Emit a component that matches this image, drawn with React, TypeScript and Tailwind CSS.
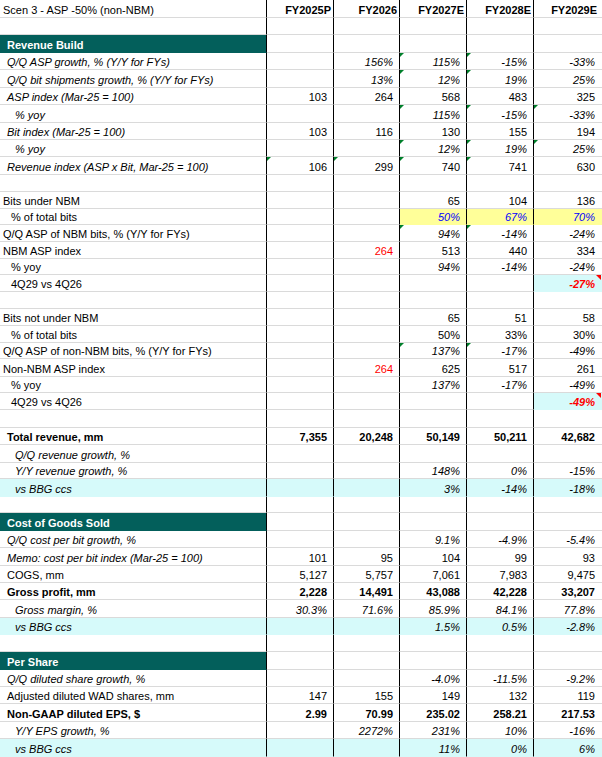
import React from "react";

type Cell = {
  v: string;
  i?: boolean;
  b?: boolean;
  c?: "red" | "blue";
  bg?: "yellow" | "cyan";
  t?: "g" | "r";
} | null;

type Row = {
  h: number;
  label?: string;
  pl?: number;
  li?: boolean;
  lb?: boolean;
  head?: boolean;
  teal?: boolean;
  cyan?: boolean;
  cells?: Cell[];
};

const HCLS: Record<number, string> = {
  16: "h-[16px]",
  17: "h-[17px]",
  18: "h-[18px]",
};

const PLCLS: Record<number, string> = {
  3: "pl-[3px]",
  7: "pl-[7px]",
  11: "pl-[11px]",
  15: "pl-[15px]",
};

const e: Cell = null;
const n = (v: string, extra: Partial<NonNullable<Cell>> = {}): Cell => ({ v, ...extra });
const it = (v: string, extra: Partial<NonNullable<Cell>> = {}): Cell => ({ v, i: true, ...extra });
const bd = (v: string): Cell => ({ v, b: true });

const rows: Row[] = [
  { h: 18, label: "Scen 3 - ASP -50% (non-NBM)", pl: 3, head: true },
  { h: 17 },
  { h: 18, label: "Revenue Build", teal: true },
  { h: 17, label: "Q/Q ASP growth, % (Y/Y for FYs)", pl: 7, li: true, cells: [e, it("156%"), it("115%", { t: "g" }), it("-15%", { t: "g" }), it("-33%")] },
  { h: 18, label: "Q/Q bit shipments growth, % (Y/Y for FYs)", pl: 7, li: true, cells: [e, it("13%"), it("12%", { t: "g" }), it("19%", { t: "g" }), it("25%")] },
  { h: 17, label: "ASP index (Mar-25 = 100)", pl: 7, li: true, cells: [n("103"), n("264"), n("568"), n("483"), n("325")] },
  { h: 18, label: "% yoy", pl: 15, li: true, cells: [e, e, it("115%", { t: "g" }), it("-15%", { t: "g" }), it("-33%", { t: "g" })] },
  { h: 17, label: "Bit index (Mar-25 = 100)", pl: 7, li: true, cells: [n("103"), n("116"), n("130"), n("155"), n("194")] },
  { h: 17, label: "% yoy", pl: 15, li: true, cells: [e, e, it("12%", { t: "g" }), it("19%", { t: "g" }), it("25%", { t: "g" })] },
  { h: 18, label: "Revenue index (ASP x Bit, Mar-25 = 100)", pl: 7, li: true, cells: [n("106", { t: "g" }), n("299", { t: "g" }), n("740", { t: "g" }), n("741", { t: "g" }), n("630")] },
  { h: 17 },
  { h: 17, label: "Bits under NBM", pl: 3, cells: [e, e, n("65"), n("104"), n("136")] },
  { h: 16, label: "% of total bits", pl: 11, cells: [e, e, it("50%", { c: "blue", bg: "yellow" }), it("67%", { c: "blue", bg: "yellow" }), it("70%", { c: "blue", bg: "yellow" })] },
  { h: 17, label: "Q/Q ASP of NBM bits, % (Y/Y for FYs)", pl: 3, cells: [e, e, it("94%", { t: "g" }), it("-14%", { t: "g" }), it("-24%")] },
  { h: 17, label: "NBM ASP index", pl: 3, cells: [e, n("264", { c: "red" }), n("513"), n("440"), n("334")] },
  { h: 16, label: "% yoy", pl: 11, cells: [e, e, it("94%"), it("-14%"), it("-24%")] },
  { h: 17, label: "4Q29 vs 4Q26", pl: 11, cells: [e, e, e, e, it("-27%", { b: true, c: "red", bg: "cyan", t: "r" })] },
  { h: 17 },
  { h: 17, label: "Bits not under NBM", pl: 3, cells: [e, e, n("65"), n("51"), n("58")] },
  { h: 17, label: "% of total bits", pl: 11, cells: [e, e, n("50%"), n("33%"), n("30%")] },
  { h: 16, label: "Q/Q ASP of non-NBM bits, % (Y/Y for FYs)", pl: 3, cells: [e, e, it("137%", { t: "g" }), it("-17%", { t: "g" }), it("-49%")] },
  { h: 18, label: "Non-NBM ASP index", pl: 3, cells: [e, n("264", { c: "red" }), n("625"), n("517"), n("261")] },
  { h: 16, label: "% yoy", pl: 11, cells: [e, e, it("137%"), it("-17%"), it("-49%")] },
  { h: 17, label: "4Q29 vs 4Q26", pl: 11, cells: [e, e, e, e, it("-49%", { b: true, c: "red", bg: "cyan", t: "r" })] },
  { h: 18 },
  { h: 17, label: "Total revenue, mm", pl: 7, lb: true, cells: [bd("7,355"), bd("20,248"), bd("50,149"), bd("50,211"), bd("42,682")] },
  { h: 18, label: "Q/Q revenue growth, %", pl: 15, li: true, cells: [e, e, e, e, e] },
  { h: 16, label: "Y/Y revenue growth, %", pl: 15, li: true, cells: [e, e, it("148%"), it("0%"), it("-15%")] },
  { h: 18, label: "vs BBG ccs", pl: 15, li: true, cyan: true, cells: [e, e, it("3%"), it("-14%"), it("-18%")] },
  { h: 16 },
  { h: 18, label: "Cost of Goods Sold", teal: true },
  { h: 17, label: "Q/Q cost per bit growth, %", pl: 7, li: true, cells: [e, e, it("9.1%"), it("-4.9%"), it("-5.4%")] },
  { h: 18, label: "Memo: cost per bit index (Mar-25 = 100)", pl: 7, li: true, cells: [n("101"), n("95"), n("104"), n("99"), n("93")] },
  { h: 17, label: "COGS, mm", pl: 7, cells: [n("5,127"), n("5,757"), n("7,061"), n("7,983"), n("9,475")] },
  { h: 17, label: "Gross profit, mm", pl: 7, lb: true, cells: [bd("2,228"), bd("14,491"), bd("43,088"), bd("42,228"), bd("33,207")] },
  { h: 18, label: "Gross margin, %", pl: 15, li: true, cells: [it("30.3%"), it("71.6%"), it("85.9%"), it("84.1%"), it("77.8%")] },
  { h: 17, label: "vs BBG ccs", pl: 15, li: true, cyan: true, cells: [e, e, it("1.5%"), it("0.5%"), it("-2.8%")] },
  { h: 17 },
  { h: 18, label: "Per Share", teal: true },
  { h: 17, label: "Q/Q diluted share growth, %", pl: 7, li: true, cells: [e, e, it("-4.0%"), it("-11.5%"), it("-9.2%")] },
  { h: 17, label: "Adjusted diluted WAD shares, mm", pl: 7, cells: [n("147"), n("155"), n("149"), n("132"), n("119")] },
  { h: 18, label: "Non-GAAP diluted EPS, $", pl: 7, lb: true, cells: [bd("2.99"), bd("70.99"), bd("235.02"), bd("258.21"), bd("217.53")] },
  { h: 17, label: "Y/Y EPS growth, %", pl: 15, li: true, cells: [e, it("2272%"), it("231%"), it("10%"), it("-16%")] },
  { h: 18, label: "vs BBG ccs", pl: 15, li: true, cyan: true, cells: [e, e, it("11%"), it("0%"), it("6%")] },
];

const HEADERS = ["FY2025P", "FY2026", "FY2027E", "FY2028E", "FY2029E"];

function ValueCell({ cell, idx, rowCyan }: { cell: Cell; idx: number; rowCyan?: boolean }) {
  const last = idx === 4;
  const bg = cell?.bg === "yellow" ? "yellow" : cell?.bg === "cyan" || rowCyan ? "cyan" : null;
  const cls = [
    "relative flex items-end justify-end whitespace-nowrap leading-[13px] border-b",
    last ? "pr-[7px]" : "pr-[6px] border-r border-r-black",
    bg === "yellow"
      ? "bg-[#ffff99] border-b-[#ffff99]"
      : bg === "cyan"
      ? "bg-[#d6fafa] border-b-[#d6fafa]"
      : "border-b-[#dadada]",
    cell?.i ? "italic" : "",
    cell?.b ? "font-bold" : "",
    cell?.c === "red" ? "text-[#ff0000]" : cell?.c === "blue" ? "text-[#0000ff]" : "",
  ].join(" ");
  return (
    <div className={cls}>
      {cell?.t === "g" && (
        <span className="absolute left-0 top-0 h-0 w-0 border-t-[4px] border-r-[4px] border-t-[#00802b] border-r-transparent" />
      )}
      {cell?.t === "r" && (
        <span className="absolute right-[1px] top-0 h-0 w-0 border-t-[5px] border-l-[5px] border-t-[#ff0000] border-l-transparent" />
      )}
      {cell?.v ?? ""}
    </div>
  );
}

export default function App() {
  return (
    <div className="w-[602px] h-[757px] overflow-hidden bg-white text-black text-[11px] font-['Liberation_Sans',Arial,sans-serif]">
      {rows.map((r, ri) => {
        const labelCls = [
          "flex items-end whitespace-nowrap leading-[13px] border-b border-r border-r-black",
          r.teal
            ? "bg-[#035f5b] border-b-[#035f5b] text-white font-bold pl-[7px]"
            : r.cyan
            ? "bg-[#d6fafa] border-b-[#d6fafa]"
            : "border-b-[#dadada]",
          r.pl ? PLCLS[r.pl] : "",
          r.li ? "italic" : "",
          r.lb ? "font-bold" : "",
        ].join(" ");
        return (
          <div key={ri} className={`grid grid-cols-[267px_67px_66px_67px_67px_68px] ${HCLS[r.h]}`}>
            <div className={labelCls}>{r.label ?? ""}</div>
            {r.head
              ? HEADERS.map((h, hi) => (
                  <div
                    key={hi}
                    className={`flex items-end justify-end whitespace-nowrap leading-[13px] font-bold border-b border-b-[#dadada] ${
                      hi === 4 ? "pr-[5px]" : "pr-[2px] border-r border-r-black"
                    }`}
                  >
                    {h}
                  </div>
                ))
              : [0, 1, 2, 3, 4].map((ci) => (
                  <ValueCell key={ci} idx={ci} cell={r.cells ? r.cells[ci] : null} rowCyan={r.cyan} />
                ))}
          </div>
        );
      })}
    </div>
  );
}
